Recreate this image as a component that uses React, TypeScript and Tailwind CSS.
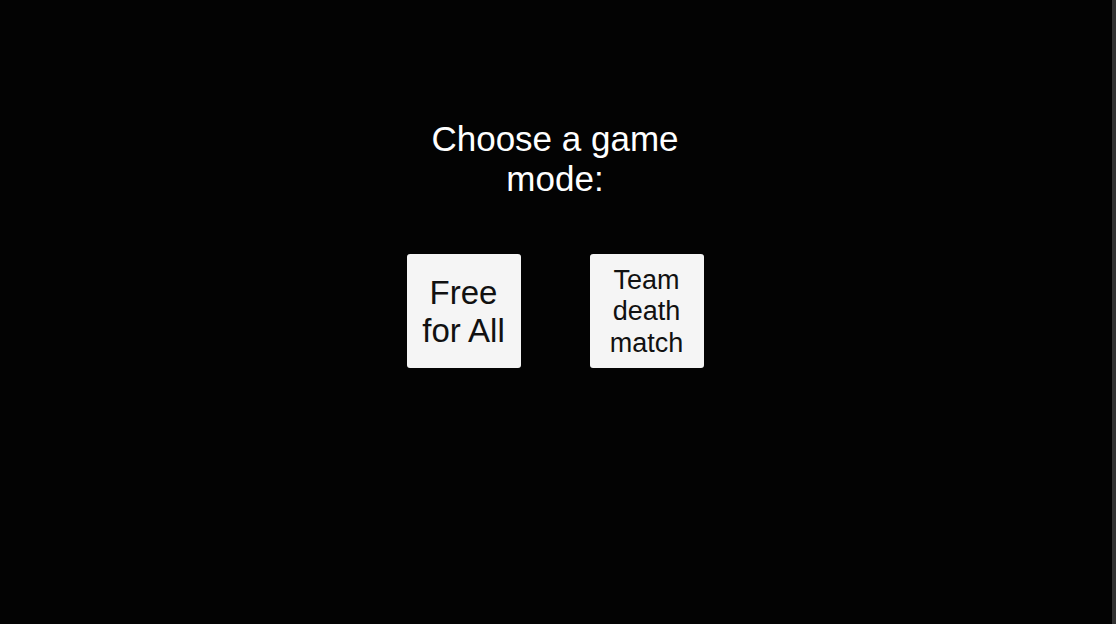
const modes = [
  { id: "ffa", label: "Free for All", size: "text-[33px]" },
  { id: "tdm", label: "Team death match", size: "text-[27px]" },
];

export default function App() {
  return (
    <div className="flex h-[624px] w-[1116px] overflow-hidden bg-[#030303] font-['Liberation_Sans',Arial,sans-serif]">
      <main className="flex flex-1 flex-col items-center pr-[2px] pt-[119px]">
        <h1 className="w-[260px] text-center text-[35px] font-normal leading-[40px] text-white">
          Choose a game mode:
        </h1>
        <div className="mt-[55px] flex gap-[69px]">
          {modes.map((m) => (
            <button
              key={m.id}
              className={`flex h-[114px] w-[114px] items-center justify-center rounded-[3px] bg-[#f5f5f5] px-2 pt-[2px] text-center leading-[1.15] text-[#111] ${m.size}`}
            >
              {m.label}
            </button>
          ))}
        </div>
      </main>
      <div className="w-[4px] bg-[#333333]" />
    </div>
  );
}
